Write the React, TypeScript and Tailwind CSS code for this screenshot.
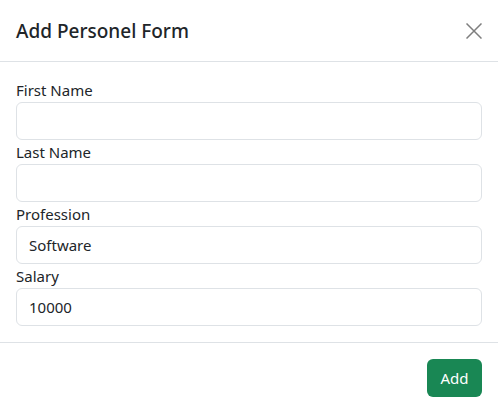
import React from "react";

function Field({ label, value }: { label: string; value: string }) {
  return (
    <div className="flex flex-col">
      <label className="text-[15px] leading-[24px] text-[#212529]">{label}</label>
      <input
        className="h-[38px] w-full rounded-[6px] border border-[#dee2e6] bg-white px-[12px] text-[15px] text-[#212529] outline-none"
        defaultValue={value}
        style={{ fontFamily: "inherit" }}
      />
    </div>
  );
}

export default function App() {
  return (
    <div
      className="flex h-[413px] w-[498px] flex-col bg-white text-[#212529]"
      style={{ fontFamily: '"Noto Sans", "Open Sans", sans-serif' }}
    >
      <div className="flex h-[62px] items-center justify-between border-b border-[#dee2e6] px-[16px]">
        <h1 className="text-[19px] font-medium leading-[30px]">Add Personel Form</h1>
        <button className="flex h-[16px] w-[16px] items-center justify-center opacity-50">
          <svg width="16" height="16" viewBox="0 0 16 16">
            <path d="M0.5 0.5L15.5 15.5M15.5 0.5L0.5 15.5" stroke="#000" strokeWidth="1.5" />
          </svg>
        </button>
      </div>
      <div className="flex flex-col p-[16px]">
        <Field label="First Name" value="" />
        <Field label="Last Name" value="" />
        <Field label="Profession" value="Software" />
        <Field label="Salary" value="10000" />
      </div>
      <div className="flex flex-1 items-center justify-end border-t border-[#dee2e6] px-[16px]">
        <button className="h-[38px] w-[55px] rounded-[6px] bg-[#198754] text-[15px] text-white">Add</button>
      </div>
    </div>
  );
}
